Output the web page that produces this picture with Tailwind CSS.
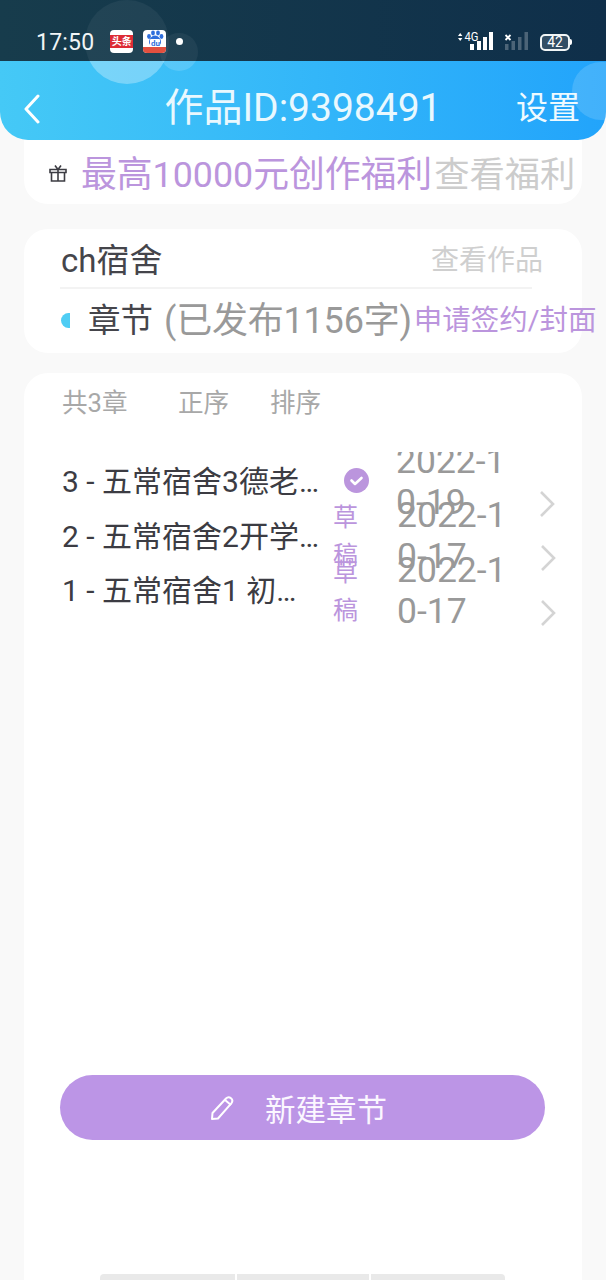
<!DOCTYPE html>
<html lang="zh-CN">
<head>
  <meta charset="UTF-8" />
  <meta name="viewport" content="width=device-width, initial-scale=1.0" />
  <title>作品管理</title>
  <script src="https://cdn.jsdelivr.net/npm/@tailwindcss/browser@4"></script>
</head>
<body class="bg-[#f9f9f9] font-['Roboto','Noto_Sans_CJK_SC',sans-serif] text-[#3c3c43]">
<div class="relative w-[606px] h-[1280px] overflow-hidden">

  <!-- Status bar -->
  <div class="relative overflow-hidden h-[61px] bg-gradient-to-r from-[#173c4c] to-[#0f2f4a] flex items-center pt-[23px] pl-[36px] pr-[34px] text-white">
    <div class="absolute left-[85px] top-0 w-[84px] h-[84px] rounded-full bg-white/5"></div>
    <div class="absolute left-[160px] top-[33px] w-[38px] h-[38px] rounded-full bg-white/5"></div>
    <span class="relative text-[23px] leading-none tracking-[0.2px] text-[#f1f5f6]">17:50</span>
    <!-- toutiao -->
    <div class="relative ml-[16px] mb-[2px] w-[23px] h-[23px] rounded-[4px] bg-white flex items-center">
      <div class="w-full h-[13px] bg-[#dd2c36] text-white text-[10px] leading-[13px] text-center font-bold overflow-hidden">头条</div>
    </div>
    <!-- baidu -->
    <div class="relative ml-[10px] mb-[2px] w-[23px] h-[23px] rounded-[4px] overflow-hidden bg-white flex flex-col">
      <svg class="w-[23px] h-[17px]" viewBox="0 0 23 17">
        <g fill="#2f6fdc">
          <ellipse cx="6" cy="6.5" rx="1.9" ry="2.4"/>
          <ellipse cx="10" cy="3" rx="1.9" ry="2.4"/>
          <ellipse cx="15" cy="3" rx="1.9" ry="2.4"/>
          <ellipse cx="18.5" cy="6.5" rx="1.9" ry="2.4"/>
          <path d="M12 5.5c3 0 6 3 6 6.5 0 3-2.500 4-6 4s-6-1-6-4c0-3.500 3-6.500 6-6.500z"/>
        </g>
        <rect x="7" y="9" width="10" height="7" rx="1" fill="#fff"/>
        <text x="8" y="15.500" font-size="8" font-weight="700" fill="#2f6fdc" font-family="Roboto">du</text>
      </svg>
      <div class="h-[6px] bg-[#e2503f]"></div>
    </div>
    <div class="relative ml-[10px] mb-[2px] w-[7px] h-[7px] rounded-full bg-white"></div>

    <div class="relative ml-auto flex items-center">
      <svg class="w-[38px] h-[22px]" viewBox="0 0 38 22">
        <path d="M3 5l2.200-3L7.400 5zM3 7l2.200 3L7.400 7z" fill="#fff"/>
        <text x="9.500" y="10" font-size="12" fill="#fff" font-family="Roboto" textLength="14" lengthAdjust="spacingAndGlyphs">4G</text>
        <rect x="15" y="13" width="4" height="6" fill="#fff"/>
        <rect x="22" y="10" width="4" height="9" fill="#fff"/>
        <rect x="28" y="6" width="4" height="13" fill="#fff"/>
        <rect x="34" y="1" width="4" height="18" fill="#fff"/>
      </svg>
      <svg class="ml-[10px] w-[26px] h-[22px]" viewBox="0 0 26 22">
        <path d="M2.500 4l5 5M7.500 4l-5 5" stroke="#fff" stroke-width="1.800"/>
        <rect x="2" y="13" width="3.500" height="6" fill="#fff" opacity=".25"/>
        <rect x="8.500" y="10" width="3.500" height="9" fill="#fff" opacity=".25"/>
        <rect x="15" y="6" width="3.500" height="13" fill="#fff" opacity=".25"/>
        <rect x="21.500" y="1" width="3.500" height="18" fill="#fff" opacity=".25"/>
      </svg>
      <div class="ml-[11px] w-[30px] h-[17px] rounded-[5px] border-2 border-[#f1f5f6] bg-white/15 text-[14px] leading-[13px] text-center text-white">42</div>
      <div class="w-[2px] h-[6px] bg-white rounded-r-sm"></div>
    </div>
  </div>

  <!-- Header -->
  <div class="relative z-10 h-[79px] rounded-b-[28px] overflow-hidden bg-gradient-to-r from-[#45c9f6] to-[#22a4fb] flex items-center justify-center text-white">
    <!-- bubbles continue from the status bar -->
    <div class="absolute left-[85px] top-[-61px] w-[84px] h-[84px] rounded-full bg-white/30"></div>
    <div class="absolute left-[160px] top-[-28px] w-[38px] h-[38px] rounded-full bg-white/15"></div>
    <div class="absolute left-[572px] top-[1px] w-[60px] h-[58px] rounded-full bg-white/15"></div>
    <svg class="absolute left-[23px] top-[31px] w-[18px] h-[32px]" viewBox="0 0 18 32" fill="none" stroke="#fff" stroke-width="3" stroke-linecap="round" stroke-linejoin="round">
      <path d="M15 4L3 17l12 13"/>
    </svg>
    <span class="relative text-[39px] leading-none text-[#e9f8fe] mt-[16px]">作品ID:9398491</span>
    <span class="absolute right-[26px] top-[29px] text-[32px] leading-[36px] text-[#eefaff]">设置</span>
  </div>

  <div class="px-[24px]">
    <!-- Welfare banner -->
    <div class="h-[64px] pt-[13px] bg-white rounded-b-[24px] flex items-start pl-[24px]">
      <svg class="mt-[10px] w-[20px] h-[20px]" viewBox="0 0 20 20" fill="none" stroke="#3c3c43" stroke-width="1.600">
        <path d="M2 6.500h16v3H2zM3.500 9.500V18h13V9.500M10 6.500V18M10 6.500L7 2.500M10 6.500l3-4"/>
      </svg>
      <div class="ml-[13px] flex items-center text-[35.800px] leading-[44px] whitespace-nowrap">
        <span class="text-[#bb95dd]">最高10000元创作福利</span>
        <span class="ml-[2px] text-[35.300px] text-[#cccccc]">查看福利</span>
      </div>
    </div>

    <!-- Work card -->
    <div class="mt-[25px] h-[124px] bg-white rounded-[24px] pl-[36px] relative">
      <div class="w-[472px] h-[60px] border-b-2 border-[#f3f3f3] flex justify-between items-center">
        <span class="ml-[1px] mt-[6px] text-[33px] text-[#45454b] leading-[60px]">ch宿舍</span>
        <span class="mt-[6px] text-[28px] text-[#cfcfcf] mr-[-11px] leading-[60px]">查看作品</span>
      </div>
      <div class="flex items-center h-[62px] whitespace-nowrap">
        <div class="w-[9px] h-[15px] shrink-0 bg-[#4fcdf4] rounded-l-full ml-[1px]"></div>
        <span class="ml-[18px] mt-[2px] text-[32.500px] text-[#45454b]">章节</span>
        <span class="ml-[11px] mt-[2px] text-[36px] tracking-[-0.2px] text-[#999999]">(已发布1156字)</span>
        <span class="text-[28.500px] mt-[2px] text-[#bb95dd] ml-[2px]">申请签约/封面</span>
      </div>
    </div>

    <!-- Chapter list -->
    <div class="mt-[20px] h-[920px] bg-white rounded-t-[24px] pl-[38px]">
      <div class="flex h-[60px] items-center text-[25.600px] text-[#a8a8a8]">
        <span class="w-[116px]">共3章</span>
        <span class="w-[92px]">正序</span>
        <span>排序</span>
      </div>
      <div class="mt-[19px] w-[520px] h-[200px] overflow-hidden pt-[1.500px]">
        <div class="flex items-center h-[54.500px]">
          <span class="w-[266px] pt-[1px] truncate text-[30px] text-[#3c3c43]">3 - 五常宿舍3德老师的课堂</span>
          <svg class="ml-[16px] w-[25px] h-[25px] shrink-0" viewBox="0 0 25 25">
            <circle cx="12.500" cy="12.500" r="12.500" fill="#bb95dd"/>
            <path d="M7.500 12.500l3.500 3.500 6.500-6" fill="none" stroke="#fff" stroke-width="2.600" stroke-linecap="round" stroke-linejoin="round"/>
          </svg>
          <span class="ml-[27px] w-[115px] pt-[2px] shrink-0 break-all text-[35.500px] leading-[41px] text-[#999999]">2022-10-19</span>
          <svg class="mt-[46px] ml-[28px] w-[16px] h-[28px]" viewBox="0 0 16 28" fill="none" stroke="#d4d4d4" stroke-width="2.600"><path d="M2 2l12 12L2 26"/></svg>
        </div>
        <div class="flex items-center h-[54.500px]">
          <span class="w-[266px] pt-[2px] truncate text-[30px] text-[#3c3c43]">2 - 五常宿舍2开学第一天</span>
          <span class="ml-[5px] w-[25px] shrink-0 pt-[4px] text-[25px] leading-[38px] text-[#bb95dd]">草稿</span>
          <span class="ml-[39px] w-[115px] pt-[2px] shrink-0 break-all text-[35.500px] leading-[41px] text-[#999999]">2022-10-17</span>
          <svg class="mt-[46px] ml-[28px] w-[16px] h-[28px]" viewBox="0 0 16 28" fill="none" stroke="#d4d4d4" stroke-width="2.600"><path d="M2 2l12 12L2 26"/></svg>
        </div>
        <div class="flex items-center h-[54.500px]">
          <span class="w-[243px] mr-[23px] pt-[2px] truncate text-[30px] text-[#3c3c43]">1 - 五常宿舍1 初来乍到</span>
          <span class="ml-[5px] w-[25px] shrink-0 pt-[4px] text-[25px] leading-[38px] text-[#bb95dd]">草稿</span>
          <span class="ml-[39px] w-[115px] pt-[2px] shrink-0 break-all text-[35.500px] leading-[41px] text-[#999999]">2022-10-17</span>
          <svg class="mt-[46px] ml-[28px] w-[16px] h-[28px]" viewBox="0 0 16 28" fill="none" stroke="#d4d4d4" stroke-width="2.600"><path d="M2 2l12 12L2 26"/></svg>
        </div>
      </div>

      <!-- New chapter button -->
      <div class="mt-[423px] ml-[-2px] w-[485px] h-[65px] rounded-full bg-[#bc95e6] flex items-center justify-center text-white">
        <svg class="ml-[-8px] w-[26px] h-[26px]" viewBox="0 0 26 26" fill="none" stroke="#fff" stroke-width="2" stroke-linejoin="round">
          <path d="M2 24l.5-6L16 3.500c1.500-1.500 3.500-1.500 5-.2s1.700 3.300.3 5L8 23.500z"/>
          <path d="M15 5l6 5"/>
        </svg>
        <span class="ml-[29px] pt-[8px] text-[30.500px] leading-none text-[#fbf7ff]">新建章节</span>
      </div>
    </div>
  </div>

  <!-- Bottom tab handles -->
  <div class="absolute left-[100px] bottom-0 flex gap-[2px]">
    <div class="w-[135px] h-[6px] bg-[#e9e9e9] rounded-tl-[4px]"></div>
    <div class="w-[132px] h-[6px] bg-[#e9e9e9]"></div>
    <div class="w-[134px] h-[6px] bg-[#e9e9e9] rounded-tr-[4px]"></div>
  </div>
</div>
</body>
</html>
